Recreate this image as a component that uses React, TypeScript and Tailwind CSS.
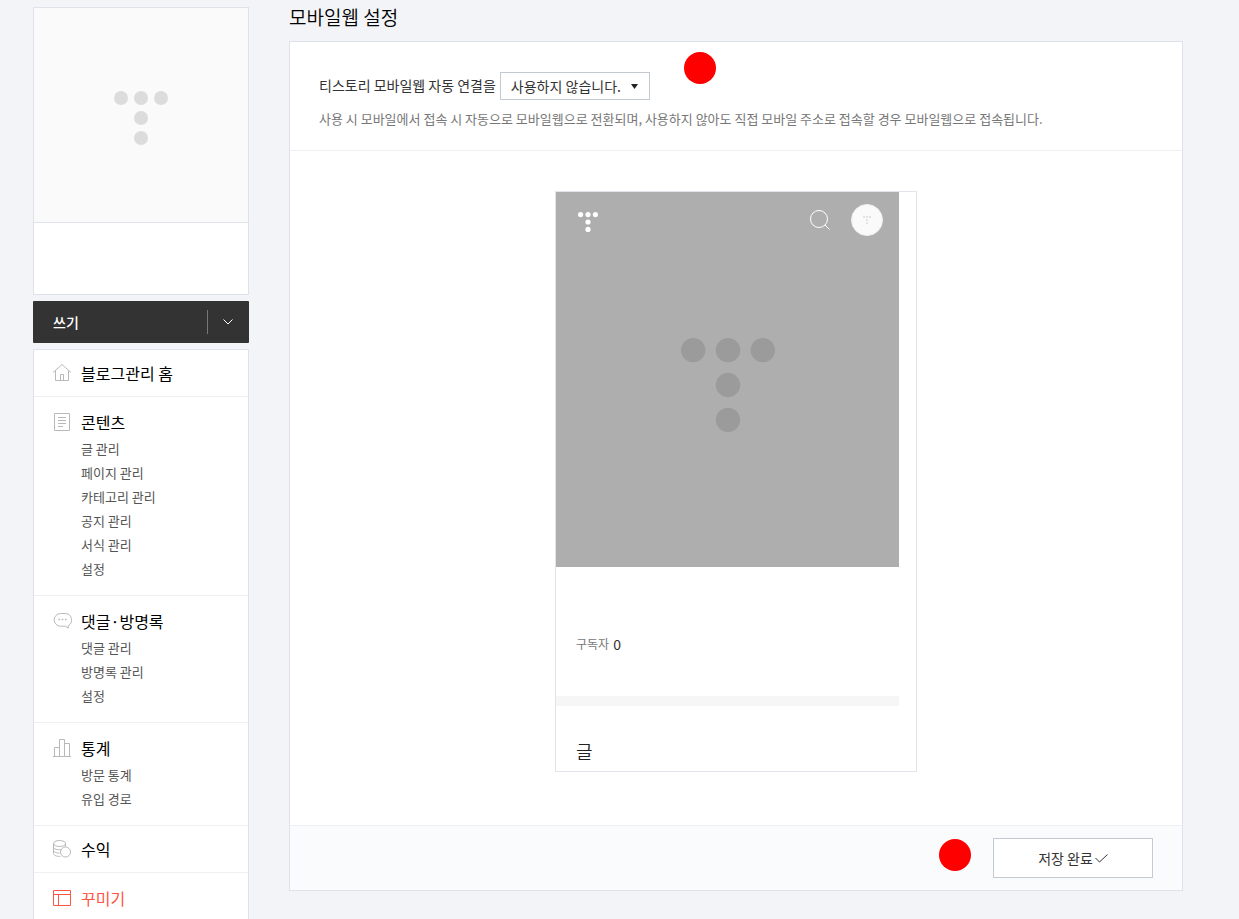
import React from 'react';

const menus = [
  { title: '블로그관리 홈', icon: HomeIcon, items: [] },
  {
    title: '콘텐츠',
    icon: ContentIcon,
    items: ['글 관리', '페이지 관리', '카테고리 관리', '공지 관리', '서식 관리', '설정'],
  },
  { title: '댓글·방명록', icon: CommentIcon, items: ['댓글 관리', '방명록 관리', '설정'] },
  { title: '통계', icon: StatIcon, items: ['방문 통계', '유입 경로'] },
  { title: '수익', icon: RevenueIcon, items: [] },
  { title: '꾸미기', icon: SkinIcon, items: [], active: true },
];

function HomeIcon() {
  return (
    <svg width="20" height="20" viewBox="0 0 20 20" fill="none" stroke="currentColor">
      <path d="M1 9.500 10 1.500l9 8" />
      <path d="M3.500 7.500v10h13v-10" />
      <path d="M8.500 17.500v-6h3v6" />
    </svg>
  );
}

function ContentIcon() {
  return (
    <svg width="20" height="20" viewBox="0 0 20 20" fill="none" stroke="currentColor">
      <path d="M2.500 1.500h15v17h-15z" />
      <path d="M6 5.500h8M6 8.500h8M6 11.500h8M6 14.500h5" />
    </svg>
  );
}

function CommentIcon() {
  return (
    <svg width="20" height="20" viewBox="0 0 20 20" fill="none" stroke="currentColor">
      <path d="M8.500 2.500h4.500a6.500 6.500 0 0 1 3.200 12.200v2.500l-2.700-2h-5a6.300 6.300 0 0 1 0-12.700z" />
      <path d="M6.500 8.500h1.600M9.700 8.500h1.600M12.900 8.500h1.600" strokeWidth="1.600" />
    </svg>
  );
}

function StatIcon() {
  return (
    <svg width="20" height="20" viewBox="0 0 20 20" fill="none" stroke="currentColor">
      <path d="M1 18.500h18" />
      <path d="M2.500 18.500v-9h5M7.500 18.500v-17h5v17M12.500 5.500h5v13" />
    </svg>
  );
}

function RevenueIcon() {
  return (
    <svg width="20" height="20" viewBox="0 0 20 20" fill="none" stroke="currentColor">
      <ellipse cx="7.500" cy="4.500" rx="6" ry="3" />
      <path d="M1.500 4.500v10c0 1.600 2.500 2.900 6 2.900h1" />
      <path d="M13.500 4.500v3" />
      <path d="M1.500 8c0 1.600 2.600 2.700 6 2.700M1.500 11.500c0 1.500 2.600 2.600 6 2.600M7.500 10.700c.8 0 1.400-.1 2-.2" />
      <circle cx="13.500" cy="13" r="5" />
    </svg>
  );
}

function SkinIcon() {
  return (
    <svg width="20" height="20" viewBox="0 0 20 20" fill="none" stroke="currentColor">
      <path d="M1.500 2.500h17v15h-17zM1.500 6.500h17M6.500 6.500v11" />
    </svg>
  );
}

// Five dots in the shape of a T
function DotLogo({ className }: { className: string }) {
  return (
    <svg viewBox="0 0 54 54" fill="currentColor" className={className}>
      <circle cx="7" cy="7" r="7" />
      <circle cx="27" cy="7" r="7" />
      <circle cx="47" cy="7" r="7" />
      <circle cx="27" cy="27" r="7" />
      <circle cx="27" cy="47" r="7" />
    </svg>
  );
}

function MenuSection({ title, icon: Icon, items, active }: any) {
  const hasGap = items.length > 0 || active;
  return (
    <li className={`border-b border-[#edeff3] pl-[18px] last:border-b-0 ${hasGap ? 'pt-3 pb-3.5' : 'py-2.5'}`}>
      <a href="#" className={`flex h-[26px] items-center text-base ${active ? 'text-[#ff5544]' : 'text-black'}`}>
        <span className={`mr-[9px] ${active ? '' : 'text-[#b9b9b9]'}`}>
          <Icon />
        </span>
        {title}
      </a>
      {items.length > 0 && (
        <ul className="mt-0.5 pl-[29px]">
          {items.map((item: string) => (
            <li key={item} className="h-6 text-[13px] leading-6 text-[#555]">
              <a href="#">{item}</a>
            </li>
          ))}
        </ul>
      )}
    </li>
  );
}

function Sidebar() {
  return (
    <aside className="flex w-[216px] shrink-0 flex-col pt-[7px]">
      <div className="border border-[#dfe2ea] bg-white">
        <div className="flex h-[215px] items-center justify-center border-b border-[#dfe2ea] bg-[#fafafa] pt-1.5">
          <DotLogo className="size-[54px] text-[#dcdcdc]" />
        </div>
        <div className="h-[71px]" />
      </div>

      <div className="mt-1.5 flex h-[42px] items-center rounded-[1px] bg-[#333] text-white">
        <button className="h-full flex-1 pl-5 text-left text-sm font-medium">쓰기</button>
        <button aria-label="글쓰기 메뉴 열기" className="flex h-6 w-[42px] items-center justify-center border-l border-[#777] pr-0.5">
          <svg width="10" height="6" viewBox="0 0 10 6" fill="none" stroke="currentColor">
            <path d="M.5.5 5 5 9.500.5" />
          </svg>
        </button>
      </div>

      <nav className="mt-1.5 flex-1 border border-b-0 border-[#dfe2ea] bg-white">
        <ul>
          {menus.map((menu) => (
            <MenuSection key={menu.title} {...menu} />
          ))}
        </ul>
      </nav>
    </aside>
  );
}

function MobilePreview() {
  return (
    <div className="mx-auto h-[581px] w-[362px] border border-[#e1e4eb] bg-white pr-[17px]">
      <div className="h-[375px] bg-[#aeaeae]">
        <div className="flex h-14 items-center pr-4 pl-[22px]">
          <DotLogo className="mt-1 size-5 text-white" />
          <button aria-label="검색" className="ml-auto text-white">
            <svg width="20" height="20" viewBox="0 0 20 20" fill="none" stroke="currentColor">
              <circle cx="9" cy="9" r="8.500" />
              <path d="m15 15 4.500 4.500" />
            </svg>
          </button>
          <span className="ml-[21px] flex size-8 items-center justify-center rounded-full border border-[#eee] bg-[#fafafa]">
            <DotLogo className="size-2 text-[#dcdcdc]" />
          </span>
        </div>
        <div className="flex justify-center pt-[90px]">
          <DotLogo className="size-[94px] text-[#9b9b9b]" />
        </div>
      </div>
      <p className="flex items-center gap-1 pt-[65px] pl-5 text-xs leading-6 text-[#777]">
        구독자 <span className="text-sm leading-6 text-[#333]">0</span>
      </p>
      <div className="mt-10 h-2.5 bg-[#f6f6f7]" />
      <h3 className="pt-8 pl-5 text-lg leading-[26px] font-[350] text-[#222]">글</h3>
    </div>
  );
}

function App() {
  return (
    <div className="flex min-h-screen gap-10 bg-[#f3f4f7] pr-14 pl-[33px] font-['Noto_Sans_CJK_KR',sans-serif]">
      <Sidebar />

      <main className="min-w-0 flex-1 pb-7">
        <h2 className="h-[41px] pt-0.5 text-[19px] leading-[30px] font-[350] text-black">모바일웹 설정</h2>

        <div className="relative border border-[#dfe2ea] bg-white">
          <section className="border-b border-[#edeff3] px-[29px] pt-[30px] pb-5">
            <div className="flex items-center gap-1 text-sm text-[#333]">
              <label htmlFor="mobile-link" className="pb-0.5">
                티스토리 모바일웹 자동 연결을
              </label>
              <div className="relative">
                <select
                  id="mobile-link"
                  className="block h-7 w-[150px] appearance-none border border-[#c3cad2] bg-white pl-2.5 text-sm leading-6 text-[#333]"
                >
                  <option>사용하지 않습니다.</option>
                  <option>사용합니다.</option>
                </select>
                <svg width="7" height="5" viewBox="0 0 7 5" className="pointer-events-none absolute top-3 right-3 fill-[#222]">
                  <path d="M0 0h7L3.500 5z" />
                </svg>
              </div>
            </div>
            <p className="mt-2 text-[13px] leading-[22px] text-[#777]">
              사용 시 모바일에서 접속 시 자동으로 모바일웹으로 전환되며, 사용하지 않아도 직접 모바일 주소로 접속할 경우 모바일웹으로 접속됩니다.
            </p>
          </section>

          <section className="pt-10 pb-[53px]">
            <MobilePreview />
          </section>

          <div className="relative flex justify-end border-t border-[#edeff3] bg-[#fafbfd] px-[29px] py-3">
            <button className="flex h-10 w-40 items-center justify-center gap-0.5 border border-[#c3cad2] bg-white text-sm text-[#333]">
              저장 완료
              <svg width="13" height="9" viewBox="0 0 13 9" fill="none" stroke="currentColor">
                <path d="m.5 4 4 4 8-7.500" />
              </svg>
            </button>
            <span className="absolute top-[13px] right-[211px] size-8 rounded-full bg-[#ff0000]" />
          </div>

          <span className="absolute top-2.5 left-[394px] size-8 rounded-full bg-[#ff0000]" />
        </div>
      </main>
    </div>
  );
}

export default App;
